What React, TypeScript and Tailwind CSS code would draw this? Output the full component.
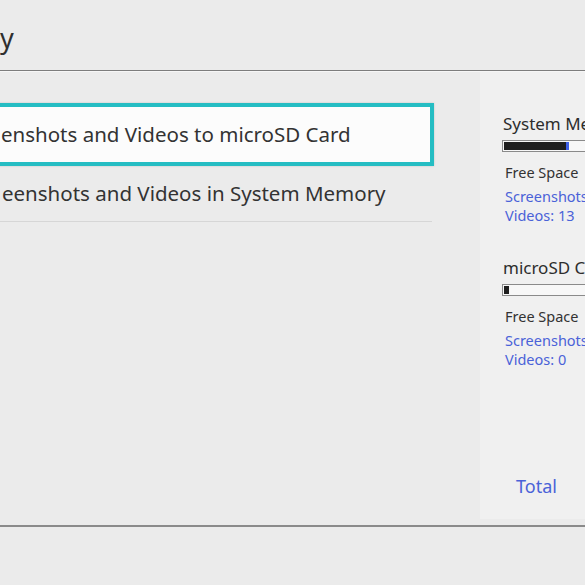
import React from "react";

const font = { fontFamily: '"Noto Sans", "Open Sans", sans-serif' };

function Bar({ fill, cap }: { fill: number; cap: boolean }) {
  return (
    <div className="flex h-[12px] w-[120px] shrink-0 border border-[#8a8a8a] bg-[#f7f7f7] p-[1px]">
      <div className="h-full bg-[#1e1e1e]" style={{ width: fill }} />
      {cap && <div className="h-full w-[3px] bg-[#3d5fe6]" />}
    </div>
  );
}

export default function App() {
  return (
    <div
      className="flex h-[585px] w-[585px] flex-col overflow-hidden bg-[#ebebeb] text-[#2d2d2d]"
      style={font}
    >
      <div className="flex h-[71px] shrink-0 items-start border-b border-[#7d7d7d]">
        <div className="pt-[22px] text-[27px] leading-[32px] text-[#2f2f2f]">y</div>
      </div>
      <div className="h-[1px] shrink-0 bg-[#f6f6f6]" />
      <div className="flex h-[447px] shrink-0">
        <div className="w-[480px] shrink-0 pt-[31px]">
          <div className="ml-[-8px] flex h-[63px] w-[442px] items-center border-[4px] border-[#25bdc3] bg-[#fcfcfc] pl-[5px] shadow-[0_0_2px_rgba(0,0,0,0.15)]">
            <span className="whitespace-nowrap text-[20.5px] text-[#333]">
              enshots and Videos to microSD Card
            </span>
          </div>
          <div className="flex h-[56px] w-[432px] items-center border-b border-[#d6d6d6] pl-[2px]">
            <span className="whitespace-nowrap text-[20.5px] text-[#333]">
              eenshots and Videos in System Memory
            </span>
          </div>
        </div>
        <div className="flex flex-1 flex-col bg-[#f0f0f0] pl-[23px] pt-[41px]">
          <div className="whitespace-nowrap text-[17px] leading-[22px] text-[#2d2d2d]">System Memory</div>
          <div className="mt-[5px] ml-[-1px]">
            <Bar fill={62} cap />
          </div>
          <div className="mt-[11px] whitespace-nowrap pl-[2px] text-[14.5px] leading-[19px] text-[#333]">Free Space</div>
          <div className="mt-[5px] whitespace-nowrap pl-[2px] text-[14.5px] leading-[19px] text-[#4a62d8]">Screenshots: 312</div>
          <div className="whitespace-nowrap pl-[2px] text-[14.5px] leading-[19px] text-[#4a62d8]">Videos: 13</div>
          <div className="mt-[32px] whitespace-nowrap text-[17px] leading-[22px] text-[#2d2d2d]">microSD Card</div>
          <div className="mt-[5px] ml-[-1px]">
            <Bar fill={5} cap={false} />
          </div>
          <div className="mt-[11px] whitespace-nowrap pl-[2px] text-[14.5px] leading-[19px] text-[#333]">Free Space</div>
          <div className="mt-[5px] whitespace-nowrap pl-[2px] text-[14.5px] leading-[19px] text-[#4a62d8]">Screenshots: 0</div>
          <div className="whitespace-nowrap pl-[2px] text-[14.5px] leading-[19px] text-[#4a62d8]">Videos: 0</div>
          <div className="mt-auto mb-[21px] pl-[13px] text-[18px] leading-[24px] text-[#4a62d8]">Total</div>
        </div>
      </div>
      <div className="h-[6px] shrink-0" />
      <div className="h-[2px] shrink-0 bg-[#8a8a8a]" />
    </div>
  );
}
